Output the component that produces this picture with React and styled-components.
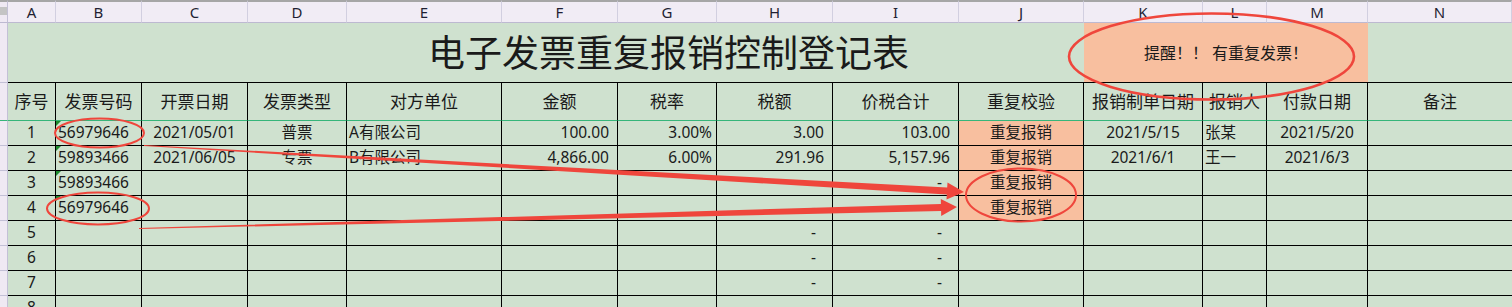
import React from 'react';
import styled, { createGlobalStyle } from 'styled-components';

const GREEN = '#cfe1cf';
const ORANGE = '#f8bf9f';
const RED = '#ef463c';
const COLS = '8px 48px 86px 106px 99px 155px 116px 99px 116px 126px 125px 119px 64px 101px 1fr';

const GlobalStyle = createGlobalStyle`
  html, body {
    margin: 0;
    padding: 0;
    background: #fff;
    overflow: hidden;
  }
  body {
    font-family: "Noto Sans", "Noto Sans CJK SC", sans-serif;
    color: #1a1a1a;
  }
`;

const Sheet = styled.div`
  position: relative;
  width: 1512px;
  height: 307px;
  overflow: hidden;
  background: ${GREEN};
`;

const Row = styled.div`
  display: grid;
  grid-template-columns: ${COLS};
  height: ${p => p.$h}px;
`;

const Corner = styled.div`
  background: #efe9f3;
  border-top: 2px solid #a6a6a6;
  border-right: 1px solid #c3c0d6;
  border-bottom: 1px solid #bdb9d1;
  display: flex;
  align-items: center;
  &::after {
    content: '';
    display: block;
    width: 7px;
    height: 8px;
    margin-top: -2px;
    background: #c4c4c4;
  }
`;

const ColLetter = styled.div`
  background: #f1ecf5;
  border-top: 2px solid #a6a6a6;
  border-right: 1px solid #d2cfe0;
  border-bottom: 1px solid #bdb9d1;
  display: flex;
  align-items: center;
  justify-content: center;
  font-size: 15px;
  line-height: 1;
  color: #1f1f33;
`;

const RowHead = styled.div`
  background: #efe9f3;
  border-right: 1px solid #c3c0d6;
  border-bottom: 1px solid ${p => p.$line || '#c3c0d6'};
`;

const Cell = styled.div`
  position: relative;
  grid-column: span ${p => p.$span || 1};
  background: ${p => p.$bg || GREEN};
  border-right: ${p => (p.$open ? 'none' : '1px solid #000')};
  border-bottom: 1px solid ${p => p.$line || '#000'};
  display: flex;
  align-items: center;
  justify-content: ${p => (p.$align === 'left' ? 'flex-start' : p.$align === 'right' ? 'flex-end' : 'center')};
  padding: 0 ${p => p.$pr || 0}px 0 ${p => (p.$align === 'left' ? 2 : 0)}px;
  font-size: ${p => p.$size || 15.5}px;
  line-height: 1;
  white-space: nowrap;
  overflow: hidden;

  ${p => p.$flag && `
    &::before {
      content: '';
      position: absolute;
      top: 0;
      left: 0;
      border-top: 5px solid #1d8c2e;
      border-right: 5px solid transparent;
    }
  `}
`;

const TitleCell = styled(Cell)`
  font-size: 37px;
  padding-left: 420px;
  justify-content: flex-start;
`;

const Overlay = styled.svg`
  position: absolute;
  top: 0;
  left: 0;
  pointer-events: none;
`;

const letters = 'ABCDEFGHIJKLMN'.split('');

const columns = [
  { align: 'center' },
  { align: 'left' },
  { align: 'center' },
  { align: 'center' },
  { align: 'left' },
  { align: 'right', pr: 8 },
  { align: 'right', pr: 4 },
  { align: 'right', pr: 8 },
  { align: 'right', pr: 8 },
  { align: 'center' },
  { align: 'center' },
  { align: 'left' },
  { align: 'center' },
  { align: 'center' },
];

const headers = ['序号', '发票号码', '开票日期', '发票类型', '对方单位', '金额', '税率', '税额', '价税合计', '重复校验', '报销制单日期', '报销人', '付款日期', '备注'];

const rows = [
  ['1', '56979646', '2021/05/01', '普票', 'A有限公司', '100.00', '3.00%', '3.00', '103.00', '重复报销', '2021/5/15', '张某', '2021/5/20', ''],
  ['2', '59893466', '2021/06/05', '专票', 'B有限公司', '4,866.00', '6.00%', '291.96', '5,157.96', '重复报销', '2021/6/1', '王一', '2021/6/3', ''],
  ['3', '59893466', '', '', '', '', '', '-', '-', '重复报销', '', '', '', ''],
  ['4', '56979646', '', '', '', '', '', '-', '-', '重复报销', '', '', '', ''],
  ['5', '', '', '', '', '', '', '-', '-', '', '', '', '', ''],
  ['6', '', '', '', '', '', '', '-', '-', '', '', '', '', ''],
  ['7', '', '', '', '', '', '', '-', '-', '', '', '', '', ''],
  ['8', '', '', '', '', '', '', '', '', '', '', '', '', ''],
];

// tapered arrow: thin at the tail, widening towards the head
function arrowPoints(x1, y1, x2, y2, w0, w1, headLen, headW) {
  const dx = x2 - x1;
  const dy = y2 - y1;
  const len = Math.hypot(dx, dy);
  const ux = dx / len, uy = dy / len;
  const nx = -uy, ny = ux;
  const bx = x2 - ux * headLen, by = y2 - uy * headLen;
  const p = (x, y) => `${x.toFixed(1)},${y.toFixed(1)}`;
  return [
    p(x1 + nx * w0, y1 + ny * w0),
    p(bx + nx * w1, by + ny * w1),
    p(bx + nx * headW, by + ny * headW),
    p(x2, y2),
    p(bx - nx * headW, by - ny * headW),
    p(bx - nx * w1, by - ny * w1),
    p(x1 - nx * w0, y1 - ny * w0),
  ].join(' ');
}

export default function App() {
  return (
    <Sheet>
      <GlobalStyle />
      <Row $h={23}>
        <Corner />
        {letters.map(l => (
          <ColLetter key={l}>{l}</ColLetter>
        ))}
      </Row>

      <Row $h={60}>
        <RowHead />
        <TitleCell $span={10} $open>电子发票重复报销控制登记表</TitleCell>
        <Cell $span={3} $bg={ORANGE} $size={16} $open>提醒！！ 有重复发票！</Cell>
        <Cell $open />
      </Row>

      <Row $h={38}>
        <RowHead $line="#36b57a" />
        {headers.map((h, i) => (
          <Cell key={h} $size={17} $line="#36b57a" $open={i === 13}>{h}</Cell>
        ))}
      </Row>

      {rows.map((r, ri) => (
        <Row key={ri} $h={25}>
          <RowHead />
          {r.map((v, ci) => {
            const col = columns[ci];
            const dash = v === '-';
            return (
              <Cell
                key={ci}
                $align={col.align}
                $pr={dash ? 16 : col.pr}
                $bg={ci === 9 && v ? ORANGE : undefined}
                $flag={ci === 1 && !!v}
                $open={ci === 13}
              >
                {v}
              </Cell>
            );
          })}
        </Row>
      ))}

      <Overlay width="1512" height="307" viewBox="0 0 1512 307">
        <ellipse cx="99.5" cy="133" rx="44.5" ry="14.5" fill="none" stroke={RED} strokeWidth="2" />
        <ellipse cx="98" cy="208.5" rx="51" ry="16" fill="none" stroke={RED} strokeWidth="2" />
        <ellipse cx="1021" cy="195" rx="55" ry="26.5" fill="none" stroke={RED} strokeWidth="2" />
        <ellipse cx="1211.5" cy="56.5" rx="142.5" ry="43" fill="none" stroke={RED} strokeWidth="2.6" />
        <polygon points={arrowPoints(144, 145.5, 964, 192, 0.5, 3.5, 17, 8.5)} fill={RED} />
        <polygon points={arrowPoints(139, 228.5, 957, 207, 0.5, 3.5, 16, 8.5)} fill={RED} />
      </Overlay>
    </Sheet>
  );
}
